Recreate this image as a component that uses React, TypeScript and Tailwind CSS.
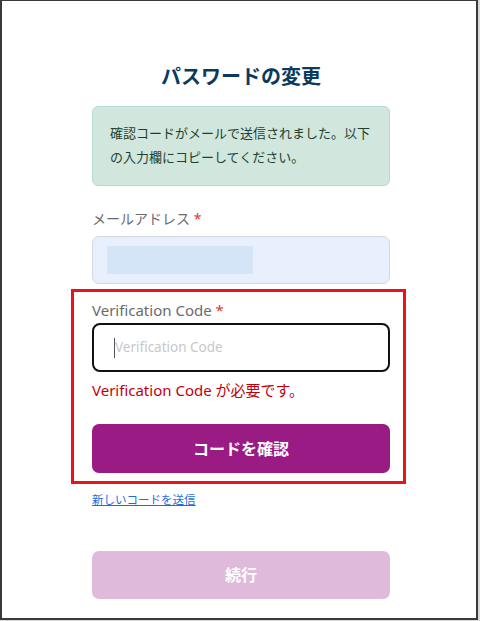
import React from "react";

export default function App() {
  const font = "font-['Noto_Sans','Noto_Sans_CJK_JP',sans-serif]";
  return (
    <div className={`w-[480px] h-[621px] bg-[#d9d9d9] ${font}`}>
      <div className="w-[478px] h-[620px] bg-white border-2 border-t border-[#3a3a3a] flex flex-col">
        <div className="ml-[90px] w-[298px] flex flex-col">
          <h1 className="mt-[61px] h-[30px] leading-[30px] text-center text-[20px] font-bold text-[#0b3a5f]">
            パスワードの変更
          </h1>
          <div className="mt-[14px] h-[80px] rounded-[6px] border border-[#b9dbcb] bg-[#d1e7dd] pl-[17px] pr-[16px] pt-[14px] text-[13px] leading-[24px] text-[#1f3f30]">
            確認コードがメールで送信されました。以下の入力欄にコピーしてください。
          </div>
          <div className="mt-[23px] h-[20px] leading-[20px] text-[14px] text-[#6b6b6b]">
            メールアドレス <span className="text-[#e53935]">*</span>
          </div>
          <div className="mt-[7px] h-[48px] rounded-[7px] border border-[#d3d7de] bg-[#e8f0fe] flex items-center pl-[14px]">
            <div className="w-[146px] h-[28px] bg-[#d5e5f8]" />
          </div>
          <div className="mt-[5px] -ml-[21px] w-[335px] border-[3px] border-[#e8141c] pl-[18px] pr-[13px] pt-[8px] pb-[8px] flex flex-col">
            <div className="h-[20px] leading-[20px] text-[15px] text-[#6b6b6b]">
              Verification Code <span className="text-[#e53935]">*</span>
            </div>
            <div className="mt-[3px] h-[49px] rounded-[8px] border-2 border-[#111] flex items-center pl-[20px]">
              <div className="w-px h-[20px] bg-[#555]" />
              <span className="text-[13.5px] text-[#c8c8c8]">Verification Code</span>
            </div>
            <div className="mt-[8px] h-[20px] leading-[20px] text-[15px] text-[#c0000a]">
              Verification Code が必要です。
            </div>
            <button className="mt-[24px] h-[49px] rounded-[7px] bg-[#9b1b84] text-white text-[16px] font-bold">
              コードを確認
            </button>
          </div>
          <a className="mt-[7px] h-[18px] leading-[18px] text-[11.5px] text-[#1a6fe0] underline self-start">
            新しいコードを送信
          </a>
          <button className="mt-[42px] h-[48px] rounded-[7px] bg-[#e0bada] text-white text-[16px] font-bold">
            続行
          </button>
        </div>
      </div>
    </div>
  );
}
